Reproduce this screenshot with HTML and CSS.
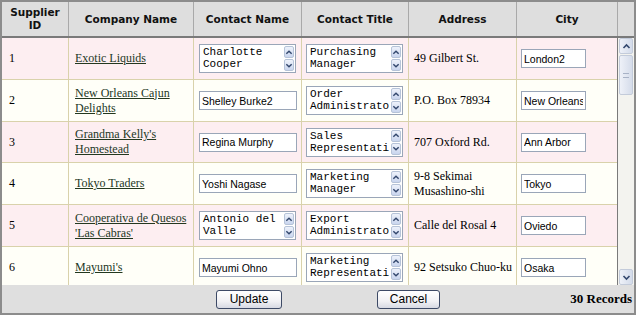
FILE: index.html
```html
<!DOCTYPE html>
<html lang="en">
<head>
    <meta charset="UTF-8">
    <title>Suppliers</title>
    <link rel="stylesheet" href="styles.css">
</head>
<body>

<div class="grid-box">
    <div class="grid-head">
        <div class="hcell">Supplier<br>ID</div>
        <div class="hcell">Company Name</div>
        <div class="hcell">Contact Name</div>
        <div class="hcell">Contact Title</div>
        <div class="hcell">Address</div>
        <div class="hcell">City</div>
        <div class="hcell hcell-bar"></div>
    </div>

    <div class="grid-body">
        <div class="rows">
            <div class="row row-alt">
                <div class="cell cell-id">1</div>
                <div class="cell cell-company"><a href="#">Exotic Liquids</a></div>
                <div class="cell cell-contact">
                    <div class="memo"><textarea>Charlotte Cooper</textarea><div class="memo-bar"><span class="mini-btn"><svg width="9" height="9" viewBox="0 0 9 9"><path d="M1.5 6 L4.5 3 L7.5 6" /></svg></span><span class="mini-btn"><svg width="9" height="9" viewBox="0 0 9 9"><path d="M1.5 3 L4.5 6 L7.5 3" /></svg></span></div></div>
                </div>
                <div class="cell cell-title">
                    <div class="memo"><textarea>Purchasing Manager</textarea><div class="memo-bar"><span class="mini-btn"><svg width="9" height="9" viewBox="0 0 9 9"><path d="M1.5 6 L4.5 3 L7.5 6" /></svg></span><span class="mini-btn"><svg width="9" height="9" viewBox="0 0 9 9"><path d="M1.5 3 L4.5 6 L7.5 3" /></svg></span></div></div>
                </div>
                <div class="cell cell-address">49 Gilbert St.</div>
                <div class="cell cell-city"><input class="text-in city-in" type="text" value="London2"></div>
            </div>

            <div class="row">
                <div class="cell cell-id">2</div>
                <div class="cell cell-company"><a href="#">New Orleans Cajun Delights</a></div>
                <div class="cell cell-contact"><input class="text-in name-in" type="text" value="Shelley Burke2"></div>
                <div class="cell cell-title">
                    <div class="memo"><textarea>Order Administrator</textarea><div class="memo-bar"><span class="mini-btn"><svg width="9" height="9" viewBox="0 0 9 9"><path d="M1.5 6 L4.5 3 L7.5 6" /></svg></span><span class="mini-btn"><svg width="9" height="9" viewBox="0 0 9 9"><path d="M1.5 3 L4.5 6 L7.5 3" /></svg></span></div></div>
                </div>
                <div class="cell cell-address">P.O. Box 78934</div>
                <div class="cell cell-city"><input class="text-in city-in" type="text" value="New Orleans"></div>
            </div>

            <div class="row row-alt row-short">
                <div class="cell cell-id">3</div>
                <div class="cell cell-company"><a href="#">Grandma Kelly's Homestead</a></div>
                <div class="cell cell-contact"><input class="text-in name-in" type="text" value="Regina Murphy"></div>
                <div class="cell cell-title">
                    <div class="memo"><textarea>Sales Representative</textarea><div class="memo-bar"><span class="mini-btn"><svg width="9" height="9" viewBox="0 0 9 9"><path d="M1.5 6 L4.5 3 L7.5 6" /></svg></span><span class="mini-btn"><svg width="9" height="9" viewBox="0 0 9 9"><path d="M1.5 3 L4.5 6 L7.5 3" /></svg></span></div></div>
                </div>
                <div class="cell cell-address">707 Oxford Rd.</div>
                <div class="cell cell-city"><input class="text-in city-in" type="text" value="Ann Arbor"></div>
            </div>

            <div class="row">
                <div class="cell cell-id">4</div>
                <div class="cell cell-company"><a href="#">Tokyo Traders</a></div>
                <div class="cell cell-contact"><input class="text-in name-in" type="text" value="Yoshi Nagase"></div>
                <div class="cell cell-title">
                    <div class="memo"><textarea>Marketing Manager</textarea><div class="memo-bar"><span class="mini-btn"><svg width="9" height="9" viewBox="0 0 9 9"><path d="M1.5 6 L4.5 3 L7.5 6" /></svg></span><span class="mini-btn"><svg width="9" height="9" viewBox="0 0 9 9"><path d="M1.5 3 L4.5 6 L7.5 3" /></svg></span></div></div>
                </div>
                <div class="cell cell-address">9-8 Sekimai Musashino-shi</div>
                <div class="cell cell-city"><input class="text-in city-in" type="text" value="Tokyo"></div>
            </div>

            <div class="row row-alt">
                <div class="cell cell-id">5</div>
                <div class="cell cell-company"><a href="#">Cooperativa de Quesos 'Las Cabras'</a></div>
                <div class="cell cell-contact">
                    <div class="memo"><textarea>Antonio del Valle</textarea><div class="memo-bar"><span class="mini-btn"><svg width="9" height="9" viewBox="0 0 9 9"><path d="M1.5 6 L4.5 3 L7.5 6" /></svg></span><span class="mini-btn"><svg width="9" height="9" viewBox="0 0 9 9"><path d="M1.5 3 L4.5 6 L7.5 3" /></svg></span></div></div>
                </div>
                <div class="cell cell-title">
                    <div class="memo"><textarea>Export Administrator</textarea><div class="memo-bar"><span class="mini-btn"><svg width="9" height="9" viewBox="0 0 9 9"><path d="M1.5 6 L4.5 3 L7.5 6" /></svg></span><span class="mini-btn"><svg width="9" height="9" viewBox="0 0 9 9"><path d="M1.5 3 L4.5 6 L7.5 3" /></svg></span></div></div>
                </div>
                <div class="cell cell-address">Calle del Rosal 4</div>
                <div class="cell cell-city"><input class="text-in city-in" type="text" value="Oviedo"></div>
            </div>

            <div class="row">
                <div class="cell cell-id">6</div>
                <div class="cell cell-company"><a href="#">Mayumi's</a></div>
                <div class="cell cell-contact"><input class="text-in name-in" type="text" value="Mayumi Ohno"></div>
                <div class="cell cell-title">
                    <div class="memo"><textarea>Marketing Representative</textarea><div class="memo-bar"><span class="mini-btn"><svg width="9" height="9" viewBox="0 0 9 9"><path d="M1.5 6 L4.5 3 L7.5 6" /></svg></span><span class="mini-btn"><svg width="9" height="9" viewBox="0 0 9 9"><path d="M1.5 3 L4.5 6 L7.5 3" /></svg></span></div></div>
                </div>
                <div class="cell cell-address">92 Setsuko Chuo-ku</div>
                <div class="cell cell-city"><input class="text-in city-in" type="text" value="Osaka"></div>
            </div>
        </div>

        <div class="vscroll">
            <div class="sb-btn"><svg width="9" height="9" viewBox="0 0 9 9"><path d="M1.5 6 L4.5 3 L7.5 6" /></svg></div>
            <div class="sb-thumb"><span class="grip"></span></div>
            <div class="sb-track"></div>
            <div class="sb-btn"><svg width="9" height="9" viewBox="0 0 9 9"><path d="M1.5 3 L4.5 6 L7.5 3" /></svg></div>
        </div>
    </div>

    <div class="grid-foot">
        <button class="xp-button btn-update">Update</button>
        <button class="xp-button btn-cancel">Cancel</button>
        <span class="record-count">30 Records</span>
    </div>
</div>

</body>
</html>
```

FILE: styles.css
```css
* {
    margin: 0;
    padding: 0;
    box-sizing: border-box;
}

body {
    background-color: #ffffff;
    font-family: "Liberation Serif", "Times New Roman", serif;
    font-size: 12px;
    color: #000;
}

.grid-box {
    width: 636px;
    border: 2px solid #8c8c8c;
    background-color: #fff;
}

/* header */
.grid-head {
    display: grid;
    grid-template-columns: 67px 125px 108px 107px 108px 101px 16px;
    height: 36px;
    background-color: #dedede;
    border-bottom: 2px solid #7a7a7a;
}

.hcell {
    display: flex;
    align-items: center;
    justify-content: center;
    text-align: center;
    font-family: "DejaVu Sans", Verdana, sans-serif;
    font-weight: bold;
    font-size: 10.5px;
    line-height: 13px;
    color: #111;
    border-right: 1px solid #a9a9a9;
}

.hcell-bar {
    border-right: none;
}

/* body */
.grid-body {
    display: flex;
    height: 247px;
}

.rows {
    width: 616px;
    height: 247px;
    overflow: hidden;
    border-right: 1px solid #7a7a7a;
}

.row {
    display: grid;
    grid-template-columns: 67px 125px 108px 107px 108px 100px;
    height: 42px;
    background-color: #fffff8;
}

.row-short {
    height: 41px;
}

.row-alt {
    background-color: #fdeef1;
}

.cell {
    display: flex;
    align-items: center;
    border-right: 1px solid #d9d2ab;
    border-bottom: 1px solid #d9d2ab;
    line-height: 15px;
}

.cell-city {
    border-right: none;
    padding-left: 4px;
}

.cell-id {
    padding-left: 7px;
}

.cell-company {
    padding: 0 3px 0 6px;
}

.cell-company a {
    color: #23381f;
}

.cell-contact {
    padding-left: 5px;
}

.cell-title {
    padding-left: 4px;
}

.cell-address {
    padding: 0 2px 0 5px;
}

/* inputs */
.text-in {
    height: 19px;
    border: 1px solid #9aa6b8;
    font-family: "Liberation Sans", Arial, sans-serif;
    font-size: 10.5px;
    padding: 0 2px;
    color: #000;
    background: #fff;
}

.name-in {
    width: 98px;
}

.city-in {
    width: 65px;
}

.memo {
    display: flex;
    width: 97px;
    height: 29px;
    border: 1px solid #9aa6b8;
    background: #fff;
}

.memo textarea {
    flex: 1;
    border: none;
    resize: none;
    overflow: hidden;
    outline: none;
    font-family: "Liberation Mono", "Courier New", monospace;
    font-size: 11px;
    line-height: 12px;
    padding: 1px 0 0 3px;
    color: #000;
    background: transparent;
}

.memo-bar {
    display: flex;
    flex-direction: column;
    justify-content: space-between;
    width: 11px;
    padding: 1px 1px 1px 0;
}

.mini-btn {
    display: flex;
    align-items: center;
    justify-content: center;
    height: 12px;
    border: 1px solid #b6c3d8;
    border-radius: 2px;
    background: linear-gradient(#eef2fb, #c9d5ee);
}

.mini-btn svg path,
.sb-btn svg path {
    fill: none;
    stroke: #34486e;
    stroke-width: 1.6;
}

/* page scrollbar */
.vscroll {
    display: flex;
    flex-direction: column;
    width: 16px;
    background-color: #f3f3ef;
}

.sb-btn {
    display: flex;
    align-items: center;
    justify-content: center;
    height: 16px;
    margin: 0 1px;
    border: 1px solid #c3cbda;
    border-radius: 2px;
    background: linear-gradient(to right, #eef1f8, #d3dbea);
}

.sb-thumb {
    display: flex;
    align-items: center;
    justify-content: center;
    height: 40px;
    margin: 1px 1px 0;
    border: 1px solid #c3cbda;
    border-radius: 2px;
    background: linear-gradient(to right, #eef1f8, #d5dcea);
}

.grip {
    width: 6px;
    height: 5px;
    border-top: 1px solid #a8b2c6;
    border-bottom: 1px solid #a8b2c6;
}

.sb-track {
    flex: 1;
}

/* footer */
.grid-foot {
    display: flex;
    align-items: center;
    height: 28px;
    background-color: #dfdfdf;
}

.xp-button {
    height: 19px;
    border: 1px solid #3d4a66;
    border-radius: 3px;
    background: linear-gradient(#ffffff, #f1f1f4 60%, #d7d9e3);
    font-family: "Liberation Sans", Arial, sans-serif;
    font-size: 12px;
    color: #000;
}

.btn-update {
    width: 66px;
    margin-left: 214px;
}

.btn-cancel {
    width: 63px;
    margin-left: 95px;
}

.record-count {
    margin-left: auto;
    padding-right: 2px;
    font-weight: bold;
    font-size: 13px;
}
```
